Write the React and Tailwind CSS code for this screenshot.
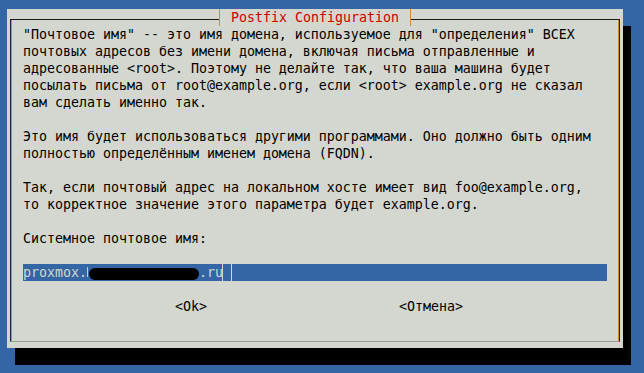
const lines = [
  '"Почтовое имя" -- это имя домена, используемое для "определения" ВСЕХ',
  'почтовых адресов без имени домена, включая письма отправленные и',
  'адресованные <root>. Поэтому не делайте так, что ваша машина будет',
  'посылать письма от root@example.org, если <root> example.org не сказал',
  'вам сделать именно так.',
  '',
  'Это имя будет использоваться другими программами. Оно должно быть одним',
  'полностью определённым именем домена (FQDN).',
  '',
  'Так, если почтовый адрес на локальном хосте имеет вид foo@example.org,',
  'то корректное значение этого параметра будет example.org.',
  '',
  'Системное почтовое имя:',
  '',
]

const Row = ({ children, className = '' }) => (
  <div className={`h-[17px] leading-[17px] whitespace-pre ${className}`}>{children}</div>
)

export default function App() {
  return (
    <div
      className="w-[644px] h-[373px] overflow-hidden bg-[#3465a4] pt-[9px] pl-[7px] text-[13.29px] text-black"
      style={{ fontFamily: '"DejaVu Sans Mono", "Liberation Mono", monospace' }}
    >
      <div className="w-[616px] h-[339px] bg-[#d3d7cf] shadow-[8px_17px_0_0_#000] pt-[10px] pl-[3px] pr-[3px] pb-[6px]">
        <div className="h-full flex flex-col border border-t-[#1b1b1b] border-l-[#1c2440] border-r-[#1c2440] border-b-[#9a9c98] shadow-[inset_1px_0_0_#c9922e,inset_-1px_0_0_#c9922e]">
          {/* title sits across the top line */}
          <div className="flex">
            <div className="ml-[208px] mt-[-11.5px] h-[17px] leading-[17px] bg-[#d3d7cf] border-l border-r border-l-[#c9922e] border-r-[#c9922e] px-[11px] text-[#cc0000]">
              Postfix Configuration
            </div>
          </div>

          <div className="pl-[12px]">
            {lines.map((l, i) => (
              <Row key={i}>{l}</Row>
            ))}

            {/* input field */}
            <div className="w-[584px] h-[17px] leading-[17px] bg-[#3465a4] text-[#d3d7cf] flex items-center whitespace-pre">
              <span>proxmox.</span>
              <span className="w-[112px] h-[17px] flex items-center">
                <span className="w-[1px] h-[10px] bg-[#c9ccc6]" />
                <span className="w-[110px] h-[12px] ml-[1px] mt-[3px] rounded-full bg-black" />
              </span>
              <span>.ru</span>
              <span className="-ml-[1px] w-[10px] h-[17px] border-l border-r border-[#d3d7cf]" />
            </div>

            <Row />
            <Row className="flex">
              <span className="ml-[152px]">{'<Ok>'}</span>
              <span className="ml-[192px]">{'<Отмена>'}</span>
            </Row>
          </div>
        </div>
      </div>
    </div>
  )
}
